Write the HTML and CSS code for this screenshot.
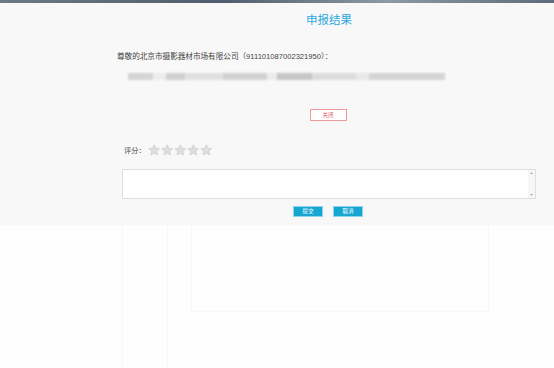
FILE: index.html
```html
<!DOCTYPE html>
<html lang="zh-CN">
<head>
    <meta charset="UTF-8">
    <title>申报结果</title>
    <link rel="stylesheet" href="styles.css">
</head>
<body>
    <!-- faint page behind the dialog -->
    <div class="backdrop">
        <div class="bg-strip"></div>
        <div class="bg-col bg-col-a"></div>
        <div class="bg-col bg-col-b"></div>
        <div class="bg-box"></div>
    </div>

    <div class="dialog">
        <h1 class="title">申报结果</h1>
        <p class="greeting">尊敬的北京市摄影器材市场有限公司（911101087002321950）：</p>
        <div class="blurred"></div>
        <div class="close-row">
            <button class="btn-close">关闭</button>
        </div>
        <div class="rating">
            <span class="rating-label">评分：</span>
            <span class="stars">
                <svg viewBox="0 0 24 24" class="star"><path d="M12 1.5l3.1 6.6 7.2.9-5.3 5 1.4 7.2L12 17.7l-6.4 3.5 1.4-7.2-5.3-5 7.2-.9z"/></svg>
                <svg viewBox="0 0 24 24" class="star"><path d="M12 1.5l3.1 6.6 7.2.9-5.3 5 1.4 7.2L12 17.7l-6.4 3.5 1.4-7.2-5.3-5 7.2-.9z"/></svg>
                <svg viewBox="0 0 24 24" class="star"><path d="M12 1.5l3.1 6.6 7.2.9-5.3 5 1.4 7.2L12 17.7l-6.4 3.5 1.4-7.2-5.3-5 7.2-.9z"/></svg>
                <svg viewBox="0 0 24 24" class="star"><path d="M12 1.5l3.1 6.6 7.2.9-5.3 5 1.4 7.2L12 17.7l-6.4 3.5 1.4-7.2-5.3-5 7.2-.9z"/></svg>
                <svg viewBox="0 0 24 24" class="star"><path d="M12 1.5l3.1 6.6 7.2.9-5.3 5 1.4 7.2L12 17.7l-6.4 3.5 1.4-7.2-5.3-5 7.2-.9z"/></svg>
            </span>
        </div>
        <div class="comment">
            <div class="comment-body"></div>
            <div class="scrollbar">
                <span class="arrow">▲</span>
                <span class="arrow">▼</span>
            </div>
        </div>
        <div class="actions">
            <button class="btn">提交</button>
            <button class="btn">取消</button>
        </div>
    </div>
</body>
</html>
```

FILE: styles.css
```css
body {
    margin: 0;
    width: 554px;
    height: 368px;
    overflow: hidden;
    background: #fefefe;
    font-family: "Liberation Sans", "Noto Sans CJK SC", sans-serif;
    color: #333;
    position: relative;
}
.backdrop {
    position: absolute;
    inset: 0;
}
.bg-strip {
    height: 3px;
    background: linear-gradient(to right, #6b7a86, #4e5e6c 40%, #8a9aa6 70%, #5c6c7a);
}
.bg-col {
    position: absolute;
    top: 225px;
    bottom: 0;
    border-left: 1px solid #f8f8f8;
}
.bg-col-a { left: 122px; }
.bg-col-b { left: 167px; }
.bg-box {
    position: absolute;
    left: 191px;
    top: 225px;
    width: 296px;
    height: 86px;
    border: 1px solid #f8f8f8;
    border-top: none;
}
.dialog {
    position: relative;
    margin-top: 3px;
    height: 222px;
    background: rgba(248, 248, 248, 0.96);
}
.title {
    margin: 0;
    padding-top: 10px;
    text-align: center;
    padding-left: 104px;
    font-size: 11.5px;
    line-height: 14px;
    font-weight: normal;
    color: #2aa8dc;
}
.greeting {
    margin: 25px 0 0 117px;
    font-size: 7.6px;
    line-height: 10px;
    color: #444;
}
.blurred {
    margin: 11px 0 0 128px;
    width: 317px;
    height: 7px;
    background: linear-gradient(to right,
        #d4d4d4 0 8%, #ececec 8% 12%, #cfcfcf 12% 18%, #e0e0e0 18% 30%,
        #d2d2d2 30% 44%, #ebebeb 44% 47%, #c6c6c6 47% 58%, #dcdcdc 58% 72%,
        #e8e8e8 72% 76%, #d4d4d4 76% 100%);
    filter: blur(1.3px);
}
.close-row {
    margin-top: 23px;
    padding-left: 102px;
    text-align: center;
}
.btn-close {
    width: 37px;
    height: 12px;
    padding: 0;
    border: 1px solid #ee9a9a;
    background: #fff;
    color: #e05a5a;
    font-family: inherit;
    font-size: 5.5px;
    line-height: 10px;
}
.rating {
    display: flex;
    align-items: center;
    margin: 23px 0 0 124px;
    height: 12px;
}
.rating-label {
    font-size: 7.2px;
    color: #444;
    width: 24px;
}
.stars {
    display: flex;
    gap: 0.5px;
}
.star {
    width: 12.5px;
    height: 12.5px;
    fill: #dedede;
    stroke: #c2c2c2;
    stroke-width: 1;
    stroke-linejoin: round;
}
.comment {
    display: flex;
    margin: 13px 0 0 122px;
    width: 414px;
    height: 30px;
    border: 1px solid #dedede;
    background: #fff;
    box-sizing: border-box;
}
.comment-body {
    flex: 1;
}
.scrollbar {
    width: 7px;
    display: flex;
    flex-direction: column;
    justify-content: space-between;
    background: #f6f6f6;
    font-size: 3.5px;
    color: #999;
    text-align: center;
    padding: 1px 0;
}
.actions {
    display: flex;
    justify-content: center;
    gap: 10px;
    margin-top: 7px;
    padding-left: 102px;
}
.btn {
    width: 30px;
    height: 11px;
    padding: 0;
    border: 1px solid #8fd3ea;
    background: #16a6d2;
    color: #fff;
    font-family: inherit;
    font-size: 5.5px;
    line-height: 9px;
}
```
